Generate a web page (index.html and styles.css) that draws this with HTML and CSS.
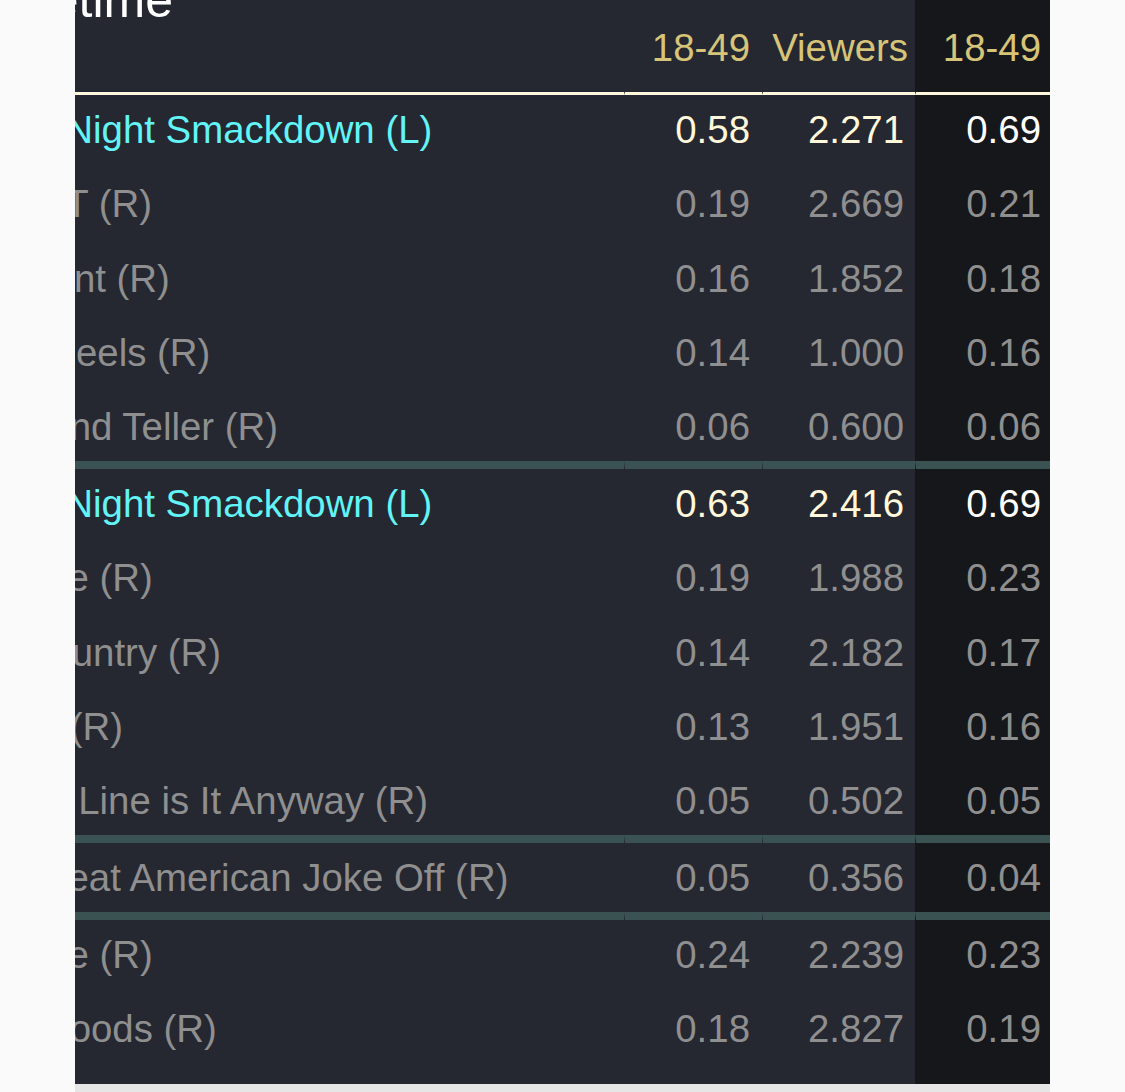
FILE: index.html
```html
<!DOCTYPE html>
<html lang="en">
<head>
  <meta charset="UTF-8">
  <meta name="viewport" content="width=device-width, initial-scale=1.0">
  <title>Friday Primetime Ratings</title>
  <link rel="stylesheet" href="styles.css">
</head>
<body>
  <div class="ratings">
    <table class="ratings-table">
      <colgroup>
        <col class="col-show">
        <col class="col-demo">
        <col class="col-viewers">
        <col class="col-prior">
      </colgroup>
      <thead>
        <tr class="title-row">
          <th class="title">Primetime</th>
          <th></th>
          <th></th>
          <th></th>
        </tr>
        <tr class="label-row">
          <th></th>
          <th>18-49</th>
          <th>Viewers</th>
          <th>18-49</th>
        </tr>
      </thead>

      <tbody class="slot">
        <tr class="live">
          <td class="name">Friday Night Smackdown (L)</td>
          <td>0.58</td>
          <td>2.271</td>
          <td>0.69</td>
        </tr>
        <tr>
          <td class="name">S.W.A.T (R)</td>
          <td>0.19</td>
          <td>2.669</td>
          <td>0.21</td>
        </tr>
        <tr>
          <td class="name">The Hunt (R)</td>
          <td>0.16</td>
          <td>1.852</td>
          <td>0.18</td>
        </tr>
        <tr>
          <td class="name">Hot Wheels (R)</td>
          <td>0.14</td>
          <td>1.000</td>
          <td>0.16</td>
        </tr>
        <tr>
          <td class="name">Penn and Teller (R)</td>
          <td>0.06</td>
          <td>0.600</td>
          <td>0.06</td>
        </tr>
      </tbody>

      <tbody class="slot">
        <tr class="live">
          <td class="name">Friday Night Smackdown (L)</td>
          <td>0.63</td>
          <td>2.416</td>
          <td>0.69</td>
        </tr>
        <tr>
          <td class="name">Dateline (R)</td>
          <td>0.19</td>
          <td>1.988</td>
          <td>0.23</td>
        </tr>
        <tr>
          <td class="name">Our Country (R)</td>
          <td>0.14</td>
          <td>2.182</td>
          <td>0.17</td>
        </tr>
        <tr>
          <td class="name">Kenan (R)</td>
          <td>0.13</td>
          <td>1.951</td>
          <td>0.16</td>
        </tr>
        <tr>
          <td class="name">Whose Line is It Anyway (R)</td>
          <td>0.05</td>
          <td>0.502</td>
          <td>0.05</td>
        </tr>
      </tbody>

      <tbody class="slot">
        <tr>
          <td class="name">The Great American Joke Off (R)</td>
          <td>0.05</td>
          <td>0.356</td>
          <td>0.04</td>
        </tr>
      </tbody>

      <tbody class="slot">
        <tr>
          <td class="name">Dateline (R)</td>
          <td>0.24</td>
          <td>2.239</td>
          <td>0.23</td>
        </tr>
        <tr class="last">
          <td class="name">Blue Bloods (R)</td>
          <td>0.18</td>
          <td>2.827</td>
          <td>0.19</td>
        </tr>
      </tbody>
    </table>
  </div>
  <div class="scroll-track"></div>
</body>
</html>
```

FILE: styles.css
```css
body {
  margin: 0;
  background-color: #fafafa;
  font-family: "Liberation Sans", Arial, Helvetica, sans-serif;
}
.ratings {
  margin-left: 75px;
  width: 975px;
  overflow: hidden;
  background-color: #252731;
}
.ratings-table {
  table-layout: fixed;
  border-collapse: separate;
  border-spacing: 0;
  width: 1112px;
  margin-left: -137px;
  margin-top: -24px;
  font-size: 38.4px;
}
.col-show {
  width: 686px;
}
.col-demo {
  width: 138px;
}
.col-viewers {
  width: 153px;
}
.col-prior {
  width: 135px;
}
th, td {
  padding: 0;
  font-weight: normal;
  white-space: nowrap;
  overflow: hidden;
  line-height: 43px;
}
th:nth-child(n+2), td:nth-child(n+2) {
  text-align: right;
  border-left: 1px solid #252731;
}
th:nth-child(4), td:nth-child(4) {
  background-color: #16171b;
  border-left-color: #16171b;
}
.title {
  text-align: left;
  padding-left: 10px;
  font-size: 50px;
  line-height: 48px;
  color: #ffffff;
}
.label-row th {
  padding-top: 2px;
  padding-bottom: 23px;
  color: #d6c478;
  border-bottom: 3px solid #fff8dc;
}
.label-row th:nth-child(2) {
  padding-right: 12px;
}
.label-row th:nth-child(3) {
  padding-right: 7px;
}
.label-row th:nth-child(4) {
  padding-right: 9px;
}
td {
  padding-top: 13px;
  padding-bottom: 18.25px;
  color: #8f8f8f;
}
tr:last-child td {
  padding-bottom: 13px;
}
td.name {
  padding-left: 10px;
}
td:nth-child(2) {
  padding-right: 12px;
}
td:nth-child(3) {
  padding-right: 11px;
}
td:nth-child(4) {
  padding-right: 9px;
}
.slot + .slot tr:first-child td {
  border-top: 8px solid #3a5252;
}
.live td {
  color: #fff8da;
}
.live td.name {
  color: #62f4f6;
}
.live td:nth-child(4) {
  color: #ffffff;
}
tr.last td {
  padding-bottom: 33.75px;
}
.scroll-track {
  margin-left: 75px;
  width: 975px;
  height: 12px;
  background-color: #e6e6e6;
}
```
